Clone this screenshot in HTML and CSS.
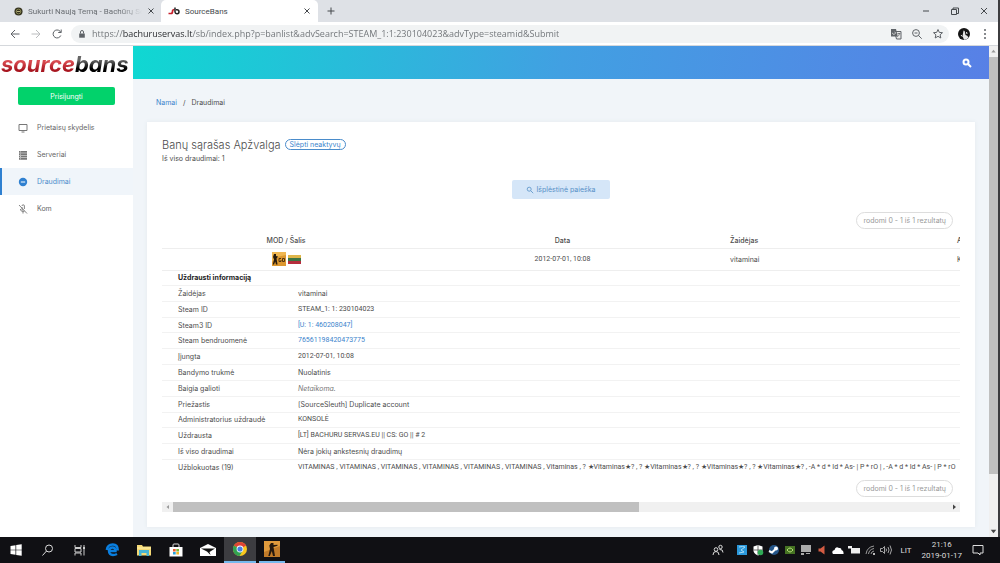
FILE: index.html
```html
<!DOCTYPE html>
<html lang="lt">
  <head>
    <meta charset="UTF-8" />
    <meta name="viewport" content="width=device-width, initial-scale=1.0" />
    <title>SourceBans</title>
    <link rel="stylesheet" href="styles.css">
  </head>
  <body>
    <div class="browser">
      <div class="tabs">
        <div class="tab">
          <svg class="favicon" viewBox="0 0 10 10"><circle cx="5" cy="5" r="4.5" fill="#35331f"/><circle cx="5" cy="5" r="2.6" fill="none" stroke="#8b8a55"/><path d="M3 5h4" stroke="#c5c08a"/></svg>
          <span class="tab-title fade">Sukurti Naują Temą - Bachūrų Se</span>
          <button class="tab-close" aria-label="Close tab"><svg viewBox="0 0 8 8"><path d="M1.5 1.5l5 5m0-5l-5 5"/></svg></button>
        </div>
        <div class="tab active">
          <svg class="favicon wide" viewBox="0 0 12 10"><path d="M0.5 7.5h2.500q1.500 0 1.500-2t2-2" fill="none" stroke="#c8202c" stroke-width="1.700"/><path d="M7 1.500v4.500a2 2 0 1 0 2-2.200h-1" fill="none" stroke="#222" stroke-width="1.500"/></svg>
          <span class="tab-title">SourceBans</span>
          <button class="tab-close" aria-label="Close tab"><svg viewBox="0 0 8 8"><path d="M1.5 1.5l5 5m0-5l-5 5"/></svg></button>
        </div>
        <button class="new-tab" aria-label="New tab"><svg viewBox="0 0 10 10"><path d="M5 1.500v7M1.500 5h7"/></svg></button>
        <div class="window-buttons">
          <button aria-label="Minimize"><svg viewBox="0 0 10 10"><path d="M2 5h6"/></svg></button>
          <button aria-label="Restore"><svg viewBox="0 0 10 10"><path d="M1.500 3.500h5v5h-5zM3 3.500v-1.500h5.500v5.500h-1.500"/></svg></button>
          <button aria-label="Close"><svg viewBox="0 0 10 10"><path d="M2 2l6 6m0-6l-6 6"/></svg></button>
        </div>
      </div>

      <div class="toolbar">
        <button aria-label="Back"><svg viewBox="0 0 12 12"><path d="M10.500 6h-8M6 2l-4 4 4 4"/></svg></button>
        <button class="disabled" aria-label="Forward"><svg viewBox="0 0 12 12"><path d="M1.500 6h8M6 2l4 4-4 4"/></svg></button>
        <button aria-label="Reload"><svg viewBox="0 0 12 12"><path d="M9.800 7.500a4 4 0 1 1-.8-4.300l1 1M10.200 1.500v3h-3"/></svg></button>
        <div class="omnibox">
          <svg class="lock" viewBox="0 0 8 8"><path d="M1.200 3.500h5.600v4.200h-5.600z" fill="#5f6368"/><path d="M2.500 3.500v-1.500a1.500 1.500 0 0 1 3 0v1.500" fill="none" stroke="#5f6368"/></svg>
          <input class="url" type="text" aria-label="Address" value="https://bachuruservas.lt/sb/index.php?p=banlist&amp;advSearch=STEAM_1:1:230104023&amp;advType=steamid&amp;Submit">
          <button aria-label="Translate"><svg viewBox="0 0 12 12"><path d="M4.500 3.500h6.500v7.500h-4.500z" fill="#e8e8e8"/><path d="M1 1h5l1.800 7.500h-6.800z" fill="#5f6368" stroke="none"/><path d="M2.500 4.800a1.400 1.400 0 1 0 2.200-1" stroke="#eee" stroke-width=".8"/><path d="M7.500 5.500h2.800M9.500 5.500q-.3 2-2 3.200" stroke-width=".8"/></svg></button>
          <button aria-label="Zoom"><svg viewBox="0 0 12 12"><circle cx="5" cy="5" r="3.400"/><path d="M7.500 7.500l3.200 3.200M3.500 5h3"/></svg></button>
          <button aria-label="Bookmark"><svg viewBox="0 0 12 12"><path d="M6 1.500l1.300 2.900 3.200.3-2.400 2.100.7 3.200L6 8.300 3.200 10l.7-3.200-2.400-2.100 3.200-.3z"/></svg></button>
        </div>
        <button class="avatar" aria-label="Profile"><svg viewBox="0 0 12 12"><circle cx="6" cy="6" r="6" fill="#141414" stroke="none"/><path d="M5.500 2.500q1.500 0 1.500 2l.5 2.500q2 0 3 2.500-1.500 2.500-4.500 2.300-1-3-1.500-3.500z" fill="#e6e6e6" stroke="none"/><path d="M3 7l1.200 1.500M8.500 4l.5 2" stroke="#eee"/></svg></button>
        <button aria-label="Menu"><svg viewBox="0 0 12 12"><g fill="#5f6368" stroke="none"><circle cx="6" cy="2" r="1"/><circle cx="6" cy="6" r="1"/><circle cx="6" cy="10" r="1"/></g></svg></button>
      </div>

      <div class="page">
        <aside class="sidebar">
          <a class="logo" href="#"><span class="logo-source">source</span><span class="logo-bans">bans</span></a>
          <button class="login">Prisijungti</button>
          <nav class="menu">
            <a href="#"><svg viewBox="0 0 10 10"><path d="M1 1.500h8v6h-8zM3.500 9h3" fill="none" stroke="#777"/></svg>Prietaisų skydelis</a>
            <a href="#"><svg viewBox="0 0 10 10"><path d="M1 1h8v1.800h-8zM1 3.300h8v1.800h-8zM1 5.600h8v1.800h-8zM1 7.900h8v1.800h-8z" fill="#777"/><path d="M2 1.900h1M2 4.200h1M2 6.500h1M2 8.800h1" stroke="#fff" stroke-width=".6"/></svg>Serveriai</a>
            <a class="current" href="#"><svg viewBox="0 0 10 10"><circle cx="5" cy="5" r="4.200" fill="#2f80d0"/><path d="M2.800 5h4.400" stroke="#fff"/></svg>Draudimai</a>
            <a href="#"><svg viewBox="0 0 10 10"><path d="M4 2a1.200 1.200 0 0 1 2.400 0v3M4 3v2a1.200 1.200 0 0 0 1.500 1.200M2.300 5q.3 2.500 2.700 2.500 1 0 1.500-.4M5 7.500v2M1 1l8 8.500" fill="none" stroke="#777" stroke-width=".9"/></svg>Kom</a>
          </nav>
        </aside>

        <main class="main">
          <header class="topbar">
            <button aria-label="Ieškoti"><svg viewBox="0 0 10 10"><circle cx="4" cy="4" r="2.500"/><path d="M6 6l3 3"/></svg></button>
          </header>
          <div class="content">
            <div class="breadcrumb"><a href="#">Namai</a><span class="slash">/</span><span>Draudimai</span></div>

            <section class="card">
              <div class="card-title">
                <h2>Banų sąrašas Apžvalga</h2>
                <a class="hide-inactive" href="#">Slėpti neaktyvų</a>
              </div>
              <p class="total">Iš viso draudimai: 1</p>
              <button class="search"><svg viewBox="0 0 10 10"><circle cx="4" cy="4" r="2.500"/><path d="M6 6l3 3"/></svg>Išplėstinė paieška</button>
              <div class="count"><span>rodomi 0 - 1 iš 1 rezultatų</span></div>

              <div class="table-wrap">
                <table class="bans">
                  <colgroup><col class="col-mod"><col class="col-date"><col class="col-player"><col></colgroup>
                  <thead>
                    <tr><th class="center">MOD / Šalis</th><th class="center">Data</th><th>Žaidėjas</th><th>Administratorius</th></tr>
                  </thead>
                  <tbody>
                    <tr class="ban">
                      <td class="center">
                        <span class="icons">
                          <svg class="mod" viewBox="0 0 14 14"><path d="M0 0h14v14h-14z" fill="#dc972f"/><path d="M0 0h14v3l-9 2-5 5z" fill="#efb650"/><path d="M2 2h2v2l2 .5-1.500 2 .5 3 .5 3h-1.500l-.8-3-1.200 3h-1.200l1.200-5-1-2.500z" fill="#23180d"/><path d="M9 6.500h-2v3h2v-1.500M10.500 6.500h2v3h-2z" fill="none" stroke="#513412"/></svg>
                          <svg class="flag" viewBox="0 0 13 9"><path d="M0 0h13v3h-13z" fill="#dfb64a"/><path d="M0 3h13v3h-13z" fill="#3c7544"/><path d="M0 6h13v3h-13z" fill="#b52d3d"/></svg>
                        </span>
                      </td>
                      <td class="center compact">2012-07-01, 10:08</td><td>vitaminai</td><td>KONSOLĖ</td>
                    </tr>
                    <tr>
                      <td class="details-cell" colspan="4">
                        <table class="details">
                          <tr><th colspan="2">Uždrausti informaciją</th></tr>
                          <tr><td>Žaidėjas</td><td>vitaminai</td></tr>
                          <tr><td>Steam ID</td><td class="compact">STEAM_1: 1: 230104023</td></tr>
                          <tr><td>Steam3 ID</td><td class="compact"><a href="#">[U: 1: 460208047]</a></td></tr>
                          <tr><td>Steam bendruomenė</td><td class="compact"><a href="#">76561198420473775</a></td></tr>
                          <tr><td>Įjungta</td><td class="compact">2012-07-01, 10:08</td></tr>
                          <tr><td>Bandymo trukmė</td><td>Nuolatinis</td></tr>
                          <tr><td>Baigia galioti</td><td><em>Netaikoma.</em></td></tr>
                          <tr><td>Priežastis</td><td>[SourceSleuth] Duplicate account</td></tr>
                          <tr><td>Administratorius uždraudė</td><td class="compact">KONSOLĖ</td></tr>
                          <tr><td>Uždrausta</td><td class="compact">[LT] BACHURU SERVAS.EU || CS: GO || # 2</td></tr>
                          <tr><td>Iš viso draudimai</td><td>Nėra jokių ankstesnių draudimų</td></tr>
                          <tr><td>Užblokuotas (19)</td><td class="compact">VITAMINAS , VITAMINAS , VITAMINAS , VITAMINAS , VITAMINAS , VITAMINAS , Vitaminas , ? ★Vitaminas★? , ? ★Vitaminas★? , ? ★Vitaminas★? , ? ★Vitaminas★? , -A * d * Id * As- | P * rO | , -A * d * Id * As- | P * rO</td></tr>
                        </table>
                      </td>
                    </tr>
                  </tbody>
                </table>
              </div>

              <div class="count"><span>rodomi 0 - 1 iš 1 rezultatų</span></div>
              <div class="hscroll">
                <svg viewBox="0 0 10 10"><path d="M6.500 3v4l-2.500-2z" fill="#999"/></svg>
                <div class="hscroll-track"><div class="hscroll-thumb"></div></div>
                <svg viewBox="0 0 10 10"><path d="M3.500 2.500v5l3-2.500z" fill="#444"/></svg>
              </div>
            </section>
          </div>
        </main>

        <div class="vscroll">
          <svg viewBox="0 0 8 10"><path d="M2 6h4l-2-2.500z" fill="#999"/></svg>
          <div class="vscroll-track"><div class="vscroll-thumb"></div></div>
          <svg viewBox="0 0 8 10"><path d="M1.500 3.500h5l-2.500 3z" fill="#444"/></svg>
        </div>
      </div>
    </div>

    <footer class="taskbar">
      <button aria-label="Start"><svg viewBox="0 0 16 16"><path d="M2.500 4l5-.8v4.500h-5zM8.200 3.100l5.500-.8v5.400h-5.500zM2.500 8.300h5v4.500l-5-.7zM8.200 8.300h5.500v5.400l-5.500-.8z" fill="#fff"/></svg></button>
      <button aria-label="Search"><svg viewBox="0 0 16 16"><circle cx="9" cy="6.500" r="3.500" fill="none" stroke="#ddd"/><path d="M6.500 9l-4 4.500" stroke="#ddd"/></svg></button>
      <button aria-label="Task view"><svg viewBox="0 0 16 16"><path d="M3 3v2.500h6v-2.500M3 13.500v-2.500h6v2.500M3 6.500h6v3.500h-6zM12 3v10.500" fill="none" stroke="#ccc"/><path d="M11 5h2v2h-2z" fill="#ccc"/></svg></button>
      <button aria-label="Edge"><svg viewBox="0 0 16 16"><path d="M5 9h6.500q0-3.500-3-3.500T5 9q0 4 4 4 2.200 0 4-1M2.800 8q.7-5.500 6-5.500 5 0 5 6" fill="none" stroke="#0a7fe0" stroke-width="2.400"/></svg></button>
      <button aria-label="Explorer"><svg viewBox="0 0 16 16"><path d="M1 3h5l1 1.500h8v9h-14z" fill="#f5d975"/><path d="M1 5.500h14v1h-14z" fill="#fff0ae"/><path d="M3 8h10v6h-2.500v-3h-5v3h-2.500z" fill="#45b3d5"/></svg></button>
      <button aria-label="Store"><svg viewBox="0 0 16 16"><path d="M1.500 5h13v9.500h-13z" fill="#fff"/><path d="M5 5v-2q0-1 1-1h4q1 0 1 1v2" fill="none" stroke="#ddd"/><path d="M5 7h2.700v2.500h-2.700z" fill="#e95b30"/><path d="M8.300 7h2.700v2.500h-2.700z" fill="#79b836"/><path d="M5 10h2.700v2.500h-2.700z" fill="#28a4dd"/><path d="M8.300 10h2.700v2.500h-2.700z" fill="#f2b82b"/></svg></button>
      <button aria-label="Mail"><svg viewBox="0 0 16 16"><path d="M0 6l8-4 8 4v8h-16z" fill="#fff"/><path d="M1 6.500h14l-5.500 3.500 1 3-3.500-3.500z" fill="#111"/></svg></button>
      <button class="running focused" aria-label="Chrome"><svg viewBox="0 0 16 16"><circle cx="8" cy="8" r="7" fill="#fac81e"/><path d="M8 8L1.900 4.500A7 7 0 0 1 14.100 4.500z" fill="#df4435"/><path d="M8 8L1.900 4.500A7 7 0 0 0 7.500 15l3-5z" fill="#32a251"/><circle cx="8" cy="8" r="3.400" fill="#fff"/><circle cx="8" cy="8" r="2.600" fill="#477fe0"/></svg></button>
      <button class="running game" aria-label="Counter-Strike"><svg viewBox="0 0 16 16"><path d="M0 0h16v16h-16z" fill="#c07a29"/><path d="M0 0h16v5l-16 6z" fill="#e09a3c"/><path d="M7 2h2.500v2l4-.3v1l-4 1.300.5 3 1 6h-2l-1.200-5-2 5h-1.500l1.700-7-.7-3.500z" fill="#24180e"/></svg></button>
      <div class="tray">
        <svg class="people" viewBox="0 0 12 12"><g fill="none" stroke="#ddd"><circle cx="4" cy="5.500" r="1.800"/><path d="M1 11q0-3.500 3-3.500t3 3.500"/><circle cx="8.500" cy="3" r="1.700"/><path d="M7.500 5.500q3.500-.5 3.500 3"/></g></svg>
        <svg viewBox="0 0 12 12"><path d="M1 1h10v10h-10z" fill="#2b99dc"/><path d="M3 3q4-1 6 0l-4 3 3 2-5 1" fill="none" stroke="#a9dcf6"/></svg>
        <svg viewBox="0 0 12 12"><path d="M6 1l4.500 1.500v4q0 3-4.500 5-4.500-2-4.500-5v-4z" fill="#fff"/><path d="M6 1v10M1.500 6h9" stroke="#333" stroke-width=".7"/><circle cx="8.500" cy="8.500" r="2.800" fill="#2faa55"/></svg>
        <svg viewBox="0 0 12 12"><circle cx="6" cy="6" r="5" fill="#245589"/><circle cx="8" cy="4.500" r="2" fill="#fff"/><path d="M1 7l3 1.500 3-3" fill="none" stroke="#fff" stroke-width="2"/></svg>
        <svg viewBox="0 0 12 12"><path d="M1 2h10v8h-10z" fill="#467323"/><path d="M3 6q3-4 6 0-3 4-6 0" fill="none" stroke="#b4da76"/></svg>
        <svg viewBox="0 0 12 12"><path d="M1 1h10v7h-10z" fill="#aaa"/><path d="M1 9h3v2h-3zM6 9h4v1h-4z" fill="#aaa"/></svg>
        <svg viewBox="0 0 12 12"><path d="M8.500 1.500v9l-4-3h-2v-3h2z" fill="#d45c43"/></svg>
        <svg viewBox="0 0 12 12"><path d="M1 10q-2-3 1.500-4 1-4 4.500-2 2.500-.5 2.500 2 2.500.5 2 4z" fill="#fff"/></svg>
        <svg viewBox="0 0 12 12"><path d="M3 4h9v5.500h-9zM0 2h4v2.500h-4z" fill="#eee"/></svg>
        <svg viewBox="0 0 12 12"><path d="M2 10q1-7 8-8M4.500 10q.5-4.500 5.500-5.500M7 10q.3-2.500 3-3" fill="none" stroke="#999"/><path d="M9 9h2v2h-2z" fill="#bbb"/></svg>
        <svg viewBox="0 0 12 12"><path d="M.5 4.500h2l2-2v7l-2-2h-2zM6 4.500q1 1.500 0 3M8 3q2 3 0 6M10 1.500q3 4.500 0 9" fill="none" stroke="#ccc" stroke-width=".8"/></svg>
        <span class="lang">LIT</span>
        <div class="clock"><span>21:16</span><span>2019-01-17</span></div>
        <svg class="notices" viewBox="0 0 12 12"><path d="M1 1.500h10v7.500h-3v2l-2-2h-5z" fill="none" stroke="#ddd"/></svg>
      </div>
    </footer>
  </body>
</html>
```
FILE: styles.css
```css
* {
  box-sizing: border-box;
}
body {
  margin: 0;
  min-height: 100vh;
  display: flex;
  flex-direction: column;
  font-family: Inter, "Open Sans", sans-serif;
  font-size: 7px;
  color: #4c4c4c;
  background: #101014;
}
button {
  border: none;
  padding: 0;
  background: none;
  font-family: inherit;
  display: flex;
  align-items: center;
  justify-content: center;
}
svg {
  display: block;
  flex: none;
}
a {
  color: #3c84cc;
  text-decoration: none;
}
h2,
p {
  margin: 0;
}
.browser {
  flex: 1;
  display: flex;
  flex-direction: column;
  border-right: 2px solid #3c3c3f;
  min-width: 0;
}

/* tab strip */
.tabs {
  display: flex;
  align-items: center;
  height: 22px;
  background: #dee1e6;
  font-family: Roboto, sans-serif;
  font-size: 8px;
}
.tab {
  display: flex;
  align-items: center;
  gap: 5px;
  width: 161px;
  height: 22px;
  padding: 0 6px 0 14px;
  color: #6a6e73;
}
.tab.active {
  width: 157px;
  padding: 0 7px;
  background: #fff;
  border-radius: 5px 5px 0 0;
  color: #45494d;
}
.favicon {
  width: 9px;
  height: 9px;
}
.favicon.wide {
  width: 12px;
  height: 10px;
}
.tab-title {
  flex: 1;
  white-space: nowrap;
  overflow: hidden;
}
.fade {
  mask-image: linear-gradient(90deg, #000 80%, transparent);
}
.tab-close svg {
  width: 8px;
  height: 8px;
}
.tabs button svg {
  fill: none;
  stroke: #45494d;
}
.new-tab {
  width: 26px;
}
.new-tab svg,
.window-buttons svg {
  width: 10px;
  height: 10px;
}
.window-buttons {
  display: flex;
  margin-left: auto;
}
.window-buttons button {
  width: 29px;
}

/* address bar */
.toolbar {
  display: flex;
  align-items: center;
  height: 24px;
  padding: 0 3px 0 4px;
  background: #fff;
  border-bottom: 1px solid #d5d8dc;
}
.toolbar button {
  width: 21px;
}
.toolbar button svg {
  width: 12px;
  height: 12px;
  fill: none;
  stroke: #5f6368;
}
.toolbar .disabled svg {
  stroke: #babcbe;
}
.omnibox {
  flex: 1;
  display: flex;
  align-items: center;
  height: 18px;
  margin: 0 4px;
  padding: 0 1px 0 7px;
  background: #f1f3f4;
  border-radius: 9px;
}
.lock {
  width: 8px;
  height: 8px;
}
.url {
  flex: 1;
  min-width: 0;
  border: none;
  padding: 0;
  margin-left: 6px;
  font-family: "Open Sans", sans-serif;
  font-size: 9px;
  outline: none;
  /* host part is darker than the rest */
  background: linear-gradient(90deg, #6d7175 31px, #24262a 31px, #24262a 101px, #6d7175 101px);
  background-clip: text;
  color: transparent;
}

/* page */
.page {
  flex: 1;
  display: flex;
  background: #f1f5f9;
}
.sidebar {
  width: 133px;
  background: #fff;
}
.logo {
  display: flex;
  height: 34px;
  padding: 1px 1px 0;
  font-size: 22px;
  line-height: 34px;
  font-weight: 700;
  font-style: italic;
}
.logo span {
  background-clip: text;
  color: transparent;
}
.logo .logo-source {
  background-image: linear-gradient(#d84a50 45%, #a81620 70%);
}
.logo .logo-bans {
  padding-right: 2px;
  background-image: linear-gradient(#666 40%, #000 65%);
}
.login {
  width: 97px;
  height: 18px;
  margin: 7px 18px 9px;
  border-radius: 2px;
  background: #02d26b;
  color: #fff;
  font-size: 7px;
}
.menu a {
  display: flex;
  align-items: center;
  gap: 9px;
  height: 27px;
  padding-left: 18px;
  color: #666;
}
.menu svg {
  width: 10px;
  height: 10px;
}
.menu .current {
  padding-left: 16px;
  border-left: 2px solid #2f80d0;
  background: #f0f5fa;
  color: #4a8ccb;
}
.main {
  flex: 1;
  min-width: 0;
}
.topbar {
  display: flex;
  align-items: center;
  justify-content: flex-end;
  height: 33px;
  padding-right: 17px;
  background: linear-gradient(100deg, #0fd8d2, #41a0e2 50%, #5880e6);
}
.topbar svg,
.search svg {
  width: 10px;
  height: 10px;
  fill: none;
  stroke: #fff;
}
.topbar svg {
  stroke-width: 2;
}
.content {
  padding: 0 14px 10px;
}
.breadcrumb {
  display: flex;
  align-items: center;
  height: 43px;
  padding: 4px 9px 0;
}
.slash {
  margin: 0 6px;
}
.card {
  padding: 15px;
  background: #fff;
  box-shadow: 0 0 4px #e3e9ee;
}
.card-title {
  display: flex;
  align-items: center;
  gap: 4px;
  height: 15px;
}
.card-title h2 {
  font-size: 11px;
  font-weight: 300;
}
.hide-inactive {
  border: 1px solid #4a8ccb;
  border-radius: 6px;
  padding: 0 4px;
  font-size: 7px;
  line-height: 9px;
}
.total {
  line-height: 13px;
}
.search {
  height: 19px;
  margin: 15px auto 13px;
  padding: 0 14px;
  gap: 2px;
  border-radius: 2px;
  background: #d5e6f8;
  color: #5590c7;
  font-size: 7px;
}
.search svg {
  width: 8px;
  height: 8px;
  stroke: #5590c7;
}
.count {
  display: flex;
  justify-content: flex-end;
  padding-right: 7px;
}
.count span {
  border: 1px solid #ddd;
  border-radius: 9px;
  padding: 0 6px;
  line-height: 15px;
  color: #999;
}

/* ban list, wider than the card and cut off by it */
.table-wrap {
  overflow: hidden;
  margin: 4px 0 5px;
}
table {
  border-collapse: collapse;
}
.bans {
  table-layout: fixed;
  width: 1330px;
}
.col-mod {
  width: 248px;
}
.col-date {
  width: 305px;
}
.col-player {
  width: 227px;
}
.bans th,
.bans td {
  padding: 0 15px;
  text-align: left;
  line-height: 9px;
  white-space: nowrap;
  border-bottom: 1px solid #eee;
}
.bans th {
  height: 15px;
  font-weight: 500;
}
.bans .center {
  text-align: center;
}
.bans .compact {
  font-family: Roboto, sans-serif;
}
.ban td {
  height: 22px;
}
.icons {
  display: flex;
  align-items: center;
  justify-content: center;
  gap: 2px;
}
.mod {
  width: 14px;
  height: 14px;
}
.flag {
  width: 13px;
  height: 9px;
}
.bans .details-cell {
  padding: 0;
  border: none;
}
.details {
  width: 100%;
  height: 204px;
}
.bans .details th,
.bans .details td {
  height: auto;
  padding: 0 16px;
  border-color: #f2f2f2;
}
.bans .details th {
  font-weight: 700;
  color: #222;
}
.details td:first-child {
  width: 121px;
}
.bans .details td + td {
  padding-left: 15px;
}
.bans .details tr:last-child td {
  border: none;
}
.details em {
  color: #777;
}

/* scrollbars */
.hscroll {
  display: flex;
  height: 10px;
  margin-top: 5px;
  background: #f0f0f0;
}
.hscroll svg {
  width: 11px;
  height: 10px;
}
.hscroll-track {
  flex: 1;
}
.hscroll-thumb {
  width: 60%;
  height: 100%;
  background: #c0c0c0;
}
.vscroll {
  display: flex;
  flex-direction: column;
  width: 9px;
  background: #f0f0f0;
}
.vscroll svg {
  width: 9px;
  height: 11px;
}
.vscroll-track {
  flex: 1;
}
.vscroll-thumb {
  height: 89%;
  background: #c0c0c0;
}

/* windows taskbar */
.taskbar {
  display: flex;
  height: 26px;
  background: #101014;
  color: #ddd;
  font-family: Roboto, sans-serif;
  font-size: 8px;
}
.taskbar button {
  width: 32px;
}
.taskbar button svg {
  width: 16px;
  height: 16px;
}
.running {
  border-bottom: 2px solid #76b9ed;
}
.focused {
  background: #3c3c40;
}
.taskbar .game {
  width: 26px;
  margin-left: 3px;
}
.tray {
  display: flex;
  align-items: center;
  gap: 4px;
  margin-left: auto;
  padding-right: 16px;
}
.tray svg {
  width: 12px;
  height: 12px;
}
.tray .people {
  margin-right: 8px;
}
.lang {
  margin: 0 6px 0 4px;
}
.clock {
  display: flex;
  flex-direction: column;
  align-items: center;
  line-height: 11px;
}
.tray .notices {
  margin-left: 6px;
}
```
